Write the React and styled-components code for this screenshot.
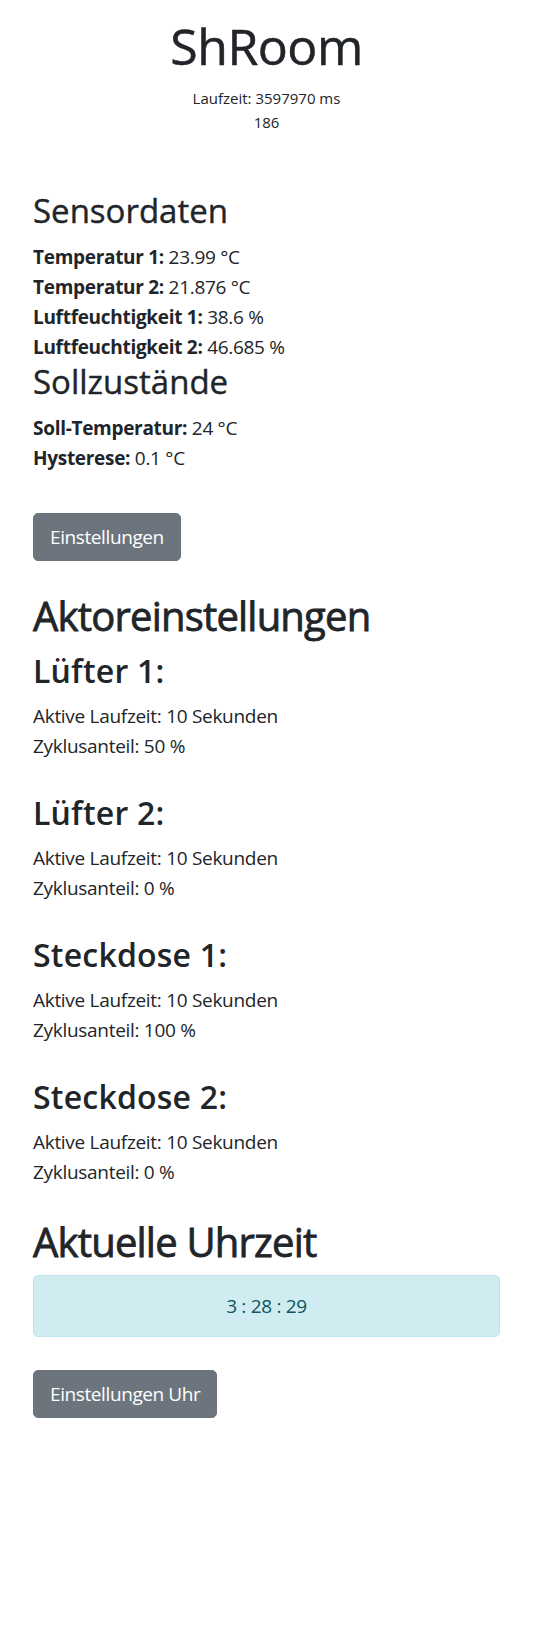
import React from "react";
import styled, { createGlobalStyle } from "styled-components";

const sensors = [
  { label: "Temperatur 1:", value: "23.99 °C" },
  { label: "Temperatur 2:", value: "21.876 °C" },
  { label: "Luftfeuchtigkeit 1:", value: "38.6 %" },
  { label: "Luftfeuchtigkeit 2:", value: "46.685 %" },
];

const targets = [
  { label: "Soll-Temperatur:", value: "24 °C" },
  { label: "Hysterese:", value: "0.1 °C" },
];

const actors = [
  { name: "Lüfter 1:", runtime: 10, share: 50 },
  { name: "Lüfter 2:", runtime: 10, share: 0 },
  { name: "Steckdose 1:", runtime: 10, share: 100 },
  { name: "Steckdose 2:", runtime: 10, share: 0 },
];

export default function App() {
  return (
    <>
      <GlobalStyle />
      <Container>
        <Header>
          <Title>ShRoom</Title>
          <Meta>
            <div>Laufzeit: 3597970 ms</div>
            <div>186</div>
          </Meta>
        </Header>

        <SectionTitle $top={58}>Sensordaten</SectionTitle>
        <InfoList>
          {sensors.map((s) => (
            <Line key={s.label}>
              <Label>{s.label}</Label> {s.value}
            </Line>
          ))}
        </InfoList>

        <SectionTitle $top={1}>Sollzustände</SectionTitle>
        <InfoList>
          {targets.map((s) => (
            <Line key={s.label}>
              <Label>{s.label}</Label> {s.value}
            </Line>
          ))}
        </InfoList>

        <Button $top={40}>Einstellungen</Button>

        <BigTitle $top={31}>Aktoreinstellungen</BigTitle>
        {actors.map((a, i) => (
          <Actor key={a.name} $top={i === 0 ? 12 : 33}>
            <ActorTitle>{a.name}</ActorTitle>
            <InfoList>
              <Line>Aktive Laufzeit: {a.runtime} Sekunden</Line>
              <Line>Zyklusanteil: {a.share} %</Line>
            </InfoList>
          </Actor>
        ))}

        <BigTitle $top={31}>Aktuelle Uhrzeit</BigTitle>
        <Alert>3 : 28 : 29</Alert>

        <Button $top={33}>Einstellungen Uhr</Button>
      </Container>
    </>
  );
}

const GlobalStyle = createGlobalStyle`
  body {
    margin: 0;
    background: #ffffff;
    color: #212529;
    font-family: "Segoe UI", "Open Sans", "Noto Sans", sans-serif;
  }
`;

const Container = styled.div`
  display: flex;
  flex-direction: column;
  align-items: flex-start;
  padding: 16px 34px 200px 33px;
`;

const Header = styled.header`
  align-self: stretch;
  display: flex;
  flex-direction: column;
  align-items: center;
  text-align: center;
`;

const Title = styled.h1`
  margin: 0;
  font-size: 50px;
  font-weight: 400;
  line-height: 60px;
  letter-spacing: -0.5px;
  -webkit-text-stroke: 0.5px #212529;
`;

const Meta = styled.div`
  margin-top: 10px;
  font-size: 15px;
  line-height: 24px;
`;

const SectionTitle = styled.h2`
  margin: ${(p) => p.$top}px 0 12px 0;
  font-size: 33px;
  font-weight: 400;
  line-height: 38px;
  -webkit-text-stroke: 0.4px #212529;
`;

const BigTitle = styled.h1`
  margin: ${(p) => p.$top}px 0 0 0;
  font-size: 40px;
  font-weight: 400;
  line-height: 48px;
  letter-spacing: -0.8px;
  -webkit-text-stroke: 0.8px #212529;
`;

const Actor = styled.section`
  margin-top: ${(p) => p.$top}px;
`;

const ActorTitle = styled.h2`
  margin: 0 0 11px 0;
  font-size: 32px;
  font-weight: 600;
  line-height: 38px;
  letter-spacing: 0.2px;
`;

const InfoList = styled.div`
  display: flex;
  flex-direction: column;
`;

const Line = styled.p`
  margin: 0;
  font-size: 19px;
  font-weight: 400;
  line-height: 30px;
  letter-spacing: -0.3px;
`;

const Label = styled.strong`
  font-weight: 700;
`;

const Button = styled.button`
  margin-top: ${(p) => p.$top}px;
  padding: 8px 16px;
  border: 1px solid #6c757d;
  border-radius: 5px;
  background: #6c757d;
  color: #ffffff;
  font-family: inherit;
  font-size: 19px;
  line-height: 30px;
  letter-spacing: -0.4px;
  cursor: pointer;
`;

const Alert = styled.div`
  align-self: stretch;
  margin-top: 9px;
  padding: 15px 20px;
  border: 1px solid #bee5eb;
  border-radius: 5px;
  background: #d1ecf1;
  color: #0c5460;
  font-size: 19px;
  line-height: 30px;
  letter-spacing: -0.3px;
  text-align: center;
`;
